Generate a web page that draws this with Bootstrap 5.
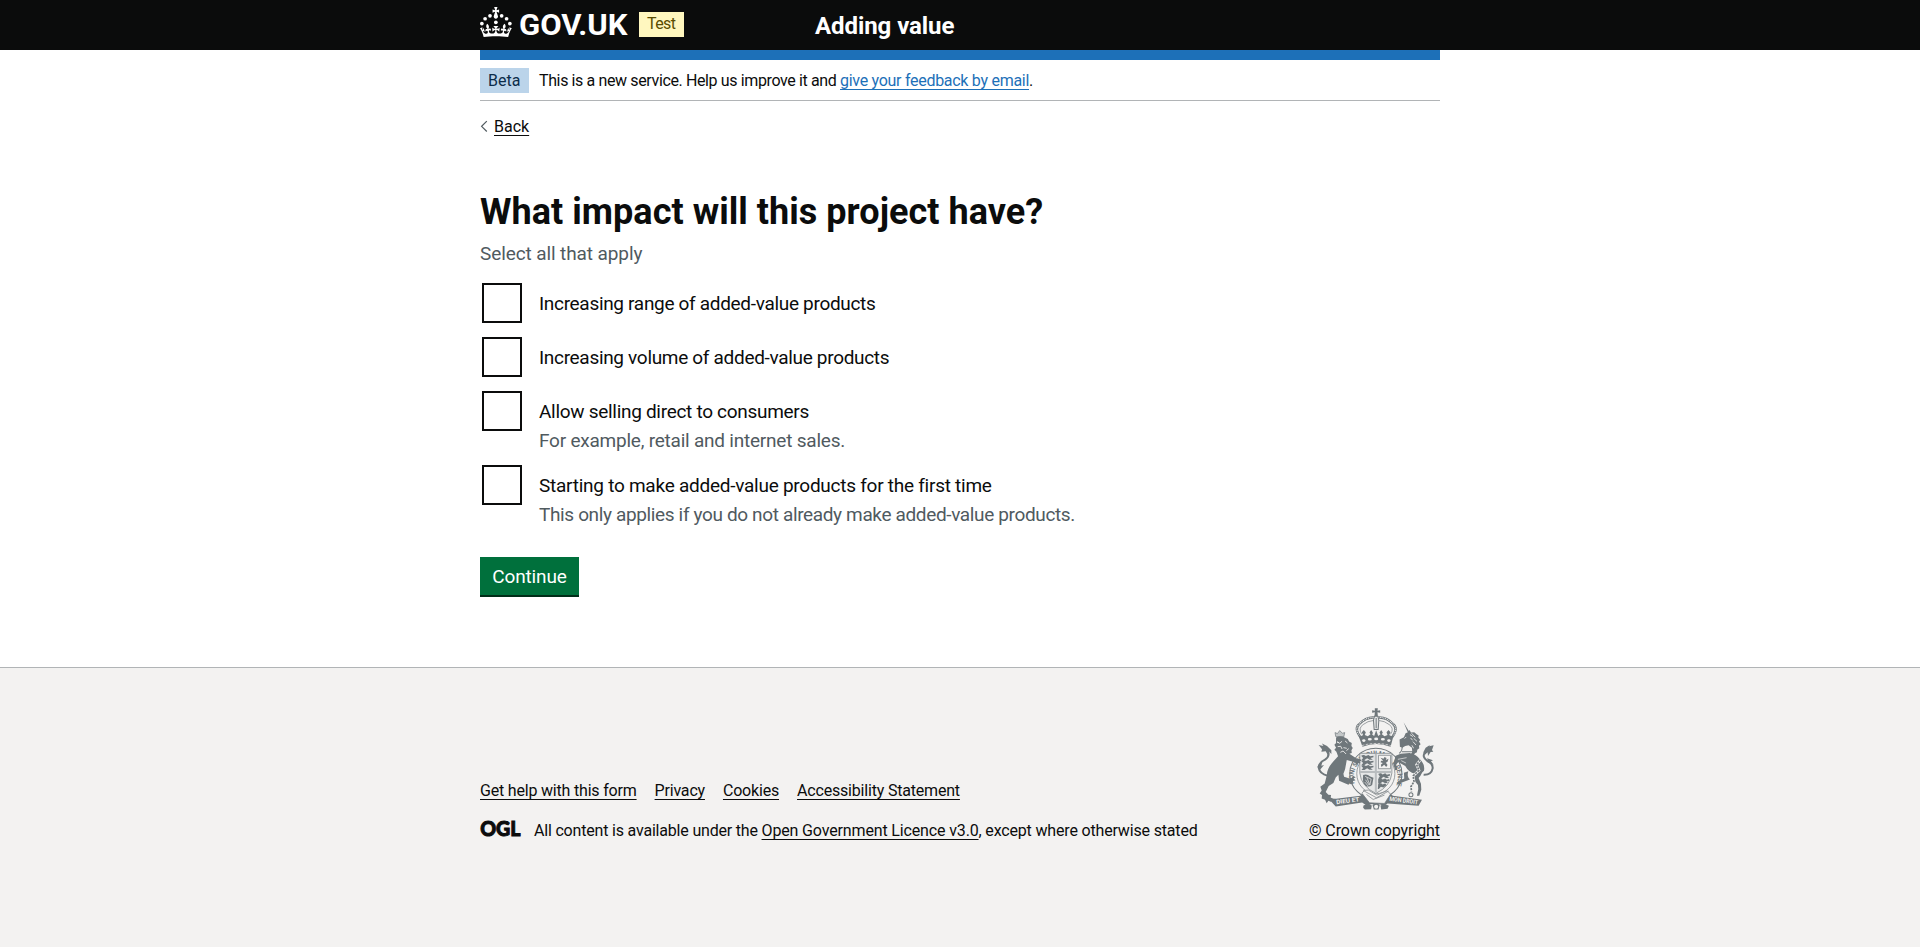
<!DOCTYPE html>
<html lang="en">
<head>
<meta charset="utf-8">
<meta name="viewport" content="width=device-width, initial-scale=1">
<title>What impact will this project have? - Adding value</title>
<link href="https://cdn.jsdelivr.net/npm/bootstrap@5.3.0/dist/css/bootstrap.min.css" rel="stylesheet">
<style>
  body { font-family: Roboto, Arial, sans-serif; color: #0b0c0c; font-size: 16px; line-height: 25px; background: #f3f2f1; }
  a { color: inherit; text-decoration-thickness: 1px; text-underline-offset: 3px; }
  a:hover { color: #003078; }
  .page-width { width: 960px; margin: 0 auto; }
  .site-header { background: #0b0c0c; color: #fff; height: 50px; }
  .site-header .page-width { height: 50px; }
  .site-logo { width: 150px; height: 32px; margin-top: 6px; overflow: visible; }
  .phase-tag { display: inline-block; height: 25px; line-height: 25px; padding: 0 8px; white-space: nowrap; }
  .tag-test { background: #fff7bf; color: #594d00; width: 45px; margin: 12px 0 0 9px; letter-spacing: -.6px; line-height: 23px; }
  .tag-beta { background: #bbd4ea; color: #0c2d4a; width: 49px; }
  .service-name { font-size: 24px; font-weight: 700; line-height: 30px; margin: 11px 0 0 131px; letter-spacing: -.07px; }
  .blue-bar { height: 10px; background: #1d70b8; }
  .phase-banner { height: 41px; padding-top: 8px; border-bottom: 1px solid #b1b4b6; }
  .phase-text { letter-spacing: -.375px; white-space: nowrap; margin-left: 10px; }
  .phase-text a { color: #1d70b8; letter-spacing: -.286px; }
  .back-row { margin-top: 16px; height: 20px; line-height: 20px; }
  .back-row svg { width: 14px; height: 14px; }
  h1 { font-size: 36px; font-weight: 700; line-height: 40px; margin: 55px 0 0; letter-spacing: .04px; }
  .hint { color: #505a5f; }
  .copy { font-size: 19px; line-height: 25px; white-space: nowrap; }
  .form-hint { margin-top: 9px; letter-spacing: -.1px; }
  .choices { margin: 17px 0 0 2px; gap: 14px; }
  .choices .form-check-input { width: 40px; height: 40px; margin: 0; border: 2px solid #0b0c0c; border-radius: 0; background-color: #fff; }
  .choice-text { margin-left: 17px; padding-top: 8px; }
  .choice-text .hint { margin-top: 4px; margin-bottom: -2px; }
  .choice-text .hint, .choice-text label { display: block; }
  .btn-continue { width: 99px; height: 38px; margin: 32px 0 72px; padding: 1px 0 0; border: 0; border-radius: 0; background: #00703c; color: #fff; box-shadow: 0 2px 0 #002d18; font-size: 19px; line-height: 37px; letter-spacing: -.13px; }
  .btn-continue:hover { background: #005a30; color: #fff; }
  .site-footer { border-top: 1px solid #b1b4b6; background: #f3f2f1; padding-top: 40px; }
  .footer-links { gap: 18px; margin-bottom: 15px; }
  .ogl { width: 41px; height: 17px; margin-right: 13px; margin-top: -4px; overflow: visible; }
  .crest { width: 117px; height: 102px; display: block; margin: 0 6.5px 8px auto; }
  .t33 { letter-spacing: -.315px; } .t29 { letter-spacing: -.295px; } .t22 { letter-spacing: -.223px; }
  .t25 { letter-spacing: -.256px; } .t36 { letter-spacing: -.36px; } .t19 { letter-spacing: -.19px; }
  .t15 { letter-spacing: -.147px; } .t17 { letter-spacing: -.169px; } .t09 { letter-spacing: -.087px; }
</style>
</head>
<body>
<header class="site-header">
  <div class="page-width d-flex align-items-start">
    <svg class="site-logo flex-shrink-0" viewBox="0 0 300 64" fill="#fff" role="img" aria-label="GOV.UK">
      <g transform="translate(0 2)">
        <circle cx="20" cy="17.6" r="3.7"/><circle cx="10.2" cy="23.5" r="3.7"/><circle cx="3.7" cy="33.2" r="3.7"/><circle cx="31.7" cy="30.6" r="3.7"/><circle cx="43.3" cy="17.6" r="3.7"/><circle cx="53.2" cy="23.5" r="3.7"/><circle cx="59.7" cy="33.2" r="3.7"/>
        <path d="M33.1,9.8c.2-.1.3-.3.5-.5l4.6,2.4v-6.8l-4.6,1.5c-.1-.2-.3-.3-.5-.5l1.9-5.9h-6.7l1.9,5.9c-.2.1-.3.3-.5.5l-4.6-1.5v6.8l4.6-2.4c.1.2.3.3.5.5l-2.6,8c-.9,2.8,1.2,5.7,4.1,5.7h0c3,0,5.1-2.9,4.1-5.7l-2.6-8ZM37,37.9s-3.4,3.8-4.1,6.1c2.2,0,4.2-.5,6.4-2.8l-.7,8.5c-2-2.8-4.4-4.1-5.7-3.8.1,3.1.5,6.7,5.8,7.2,3.7.3,6.7-1.5,7-3.8.4-2.6-2-4.3-3.7-1.6-1.4-4.5,2.4-6.1,4.9-3.2-1.9-4.5-1.8-7.7,2.4-10.9,3,4,2.6,7.3-1.2,11.1,2.4-1.3,6.2,0,4,4.6-1.2-2.8-3.7-2.2-4.2.2-.3,1.7.7,3.7,3,4.2,1.9.3,4.7-.9,7-5.9-1.3,0-2.4.7-3.9,1.7l2.4-8c.6,2.3,1.4,3.7,2.2,4.5.6-1.6.5-2.8,0-5.3l5,1.8c-2.6,3.6-5.2,8.7-7.3,17.5-7.4-1.1-15.7-1.7-24.5-1.7h0c-8.8,0-17.1.6-24.5,1.7-2.1-8.9-4.7-13.9-7.3-17.5l5-1.8c-.5,2.5-.6,3.7,0,5.3.8-.8,1.6-2.3,2.2-4.5l2.4,8c-1.5-1-2.6-1.7-3.9-1.7,2.3,5,5.2,6.2,7,5.9,2.3-.4,3.3-2.4,3-4.2-.5-2.4-3-3.1-4.2-.2-2.2-4.6,1.6-6,4-4.6-3.7-3.7-4.2-7.1-1.2-11.1,4.2,3.2,4.3,6.4,2.4,10.9,2.5-2.8,6.3-1.3,4.9,3.2-1.8-2.7-4.1-1-3.7,1.6.3,2.3,3.3,4.1,7,3.8,5.4-.5,5.7-4.2,5.8-7.2-1.3-.2-3.7,1-5.7,3.8l-.7-8.5c2.2,2.3,4.2,2.7,6.4,2.8-.7-2.3-4.1-6.1-4.1-6.1h10.6,0Z"/>
      </g>
      <text x="78" y="57" font-size="58" font-weight="700" textLength="217" lengthAdjust="spacingAndGlyphs">GOV.UK</text>
    </svg>
    <span class="phase-tag tag-test">Test</span>
    <span class="service-name">Adding value</span>
  </div>
</header>

<div class="bg-white">
  <div class="page-width">
    <div class="blue-bar"></div>
    <div class="phase-banner d-flex">
      <span class="phase-tag tag-beta">Beta</span>
      <span class="phase-text">This is a new service. Help us improve it and <a href="#">give your feedback by email</a>.</span>
    </div>
    <div class="back-row d-flex align-items-center">
      <svg viewBox="0 0 14 14" fill="none" stroke="#505a5f" stroke-width="1.2"><path d="M6.8 1.1 1.6 6.3 6.8 11.5"/></svg>
      <a href="#">Back</a>
    </div>
    <main>
      <h1>What impact will this project have?</h1>
      <div class="copy hint form-hint">Select all that apply</div>
      <div class="choices d-flex flex-column">
        <div class="d-flex">
          <input class="form-check-input flex-shrink-0" type="checkbox" id="c1">
          <div class="choice-text copy"><label class="t33" for="c1">Increasing range of added-value products</label></div>
        </div>
        <div class="d-flex">
          <input class="form-check-input flex-shrink-0" type="checkbox" id="c2">
          <div class="choice-text copy"><label class="t33" for="c2">Increasing volume of added-value products</label></div>
        </div>
        <div class="d-flex">
          <input class="form-check-input flex-shrink-0" type="checkbox" id="c3">
          <div class="choice-text copy"><label class="t29" for="c3">Allow selling direct to consumers</label><span class="hint t22">For example, retail and internet sales.</span></div>
        </div>
        <div class="d-flex">
          <input class="form-check-input flex-shrink-0" type="checkbox" id="c4">
          <div class="choice-text copy"><label class="t25" for="c4">Starting to make added-value products for the first time</label><span class="hint t36">This only applies if you do not already make added-value products.</span></div>
        </div>
      </div>
      <button class="btn btn-continue" type="button">Continue</button>
    </main>
  </div>
</div>

<footer class="site-footer">
  <div class="page-width d-flex justify-content-between align-items-end text-nowrap">
    <div>
      <div class="footer-links d-flex t19">
        <a href="#">Get help with this form</a><a href="#">Privacy</a><a href="#">Cookies</a><a href="#">Accessibility Statement</a>
      </div>
      <div class="d-flex align-items-center">
        <svg class="ogl" viewBox="0 0 41 17" role="img" aria-label="Open Government Licence"><text x=".2" y="16" font-family="Lato, sans-serif" font-size="21.5" font-weight="900" textLength="40.4" lengthAdjust="spacingAndGlyphs" fill="#0b0c0c" stroke="#0b0c0c" stroke-width="1">OGL</text></svg>
        <span class="t19">All content is available under the <a class="t15" href="#">Open Government Licence v3.0</a><span class="t17">, except where otherwise stated</span></span>
      </div>
    </div>
    <div>
      <svg class="crest" viewBox="50 54 350 304" fill="#6f777b" stroke="#6f777b" stroke-width="0" aria-hidden="true">
        <!-- garter and shield -->
        <ellipse cx="226" cy="250" rx="78" ry="76" fill="#f3f2f1" stroke-width="3"/>
        <ellipse cx="226" cy="250" rx="57" ry="60" fill="none" stroke-width="2"/>
        <path id="garter" d="M163 282A66 66 0 1 1 289 280" fill="none"/>
        <text font-size="20" font-weight="700" textLength="250"><textPath href="#garter" startOffset="2">HONI SOIT QUI MAL Y PENSE</textPath></text>
        <path d="M178 189H274V248Q270 288 226 309Q182 288 178 248Z" fill="#e6e7e7" stroke-width="2"/>
        <path d="M223 190h6v116h-6zM178 242h96v6h-96z" fill="#b9bdbf"/>
        <path d="M182 196q8-5 14 1l8-3 5 4 10-2v5l-9 2 7 5h-10l-7-4-8 5h-9l5-6zM182 211q8-5 14 1l8-3 5 4 10-2v5l-9 2 7 5h-10l-7-4-8 5h-9l5-6zM182 226q8-5 14 1l8-3 5 4 10-2v5l-9 2 7 5h-10l-7-4-8 5h-9l5-6z"/>
        <path d="M233 251q8-5 13 1l8-3 5 4 9-2v5l-8 2 6 5h-10l-7-4-7 5h-9l5-6zM233 266q8-5 13 1l8-3 5 4 7-2v5l-8 2 4 5h-9l-7-4-7 5h-6zM233 281q8-5 13 1l8-3 4 5-9 7-8-2-6 7h-3z"/>
        <path d="M234 195h36v40h-36z" fill="#f3f2f1" stroke-width="2"/>
        <path d="M240 202l9 3 3-5 6 3-2 6 8-4-3 9-5 3 5 7-4 6-6-7-8 7-2-7 6-5-7-2 2-5 6 1z"/>
        <path d="M188 254q11-5 21 4l10 4-4 22q-10 8-20 2-10-8-7-32z"/>
        <path d="M194 258l18 8-4 18M199 261l9 22M195 268l11 16M193 275l10 12" fill="none" stroke="#f3f2f1" stroke-width="2"/>
        <!-- crown -->
        <path d="M223 54h9l-1 8 8-2v8l-8-2 1 12h-10l1-12-8 2v-8l8 2z"/>
        <path d="M181 142Q160 115 176 102Q197 80 221 82M274 142Q294 115 278 102Q258 80 233 82" fill="none" stroke-width="7"/>
        <path d="M181 142Q160 115 176 102Q197 80 221 82M274 142Q294 115 278 102Q258 80 233 82" fill="none" stroke="#f3f2f1" stroke-width="3" stroke-dasharray="3 2.5"/>
        <path d="M184 132Q172 114 188 103Q202 92 218 91M270 132Q282 114 266 103Q252 92 236 91" fill="none" stroke-width="2"/>
        <path d="M222 78h10l3 12-2 28h-12l-2-28z" fill="#e6e7e7" stroke-width="3"/><path d="M227 83v31" stroke-width="3"/>
        <path d="M173 133l8 5 7-4-4-8 6-7 6 7-3 8 9 4 8-6-3-5 5-8 5 8-1 5h-2l7 5 6-17 6 17 7-5-3-5 5-8 5 8-3 5 8 6 9-4-3-8 6-7 6 7-4 8 7 4 7-5-10 36q-43-16-84 0z"/>
        <g fill="#f3f2f1"><ellipse cx="190" cy="151" rx="5" ry="4"/><ellipse cx="208" cy="147" rx="6" ry="4"/><ellipse cx="227" cy="146" rx="6" ry="4"/><ellipse cx="247" cy="147" rx="6" ry="4"/><ellipse cx="265" cy="151" rx="5" ry="4"/></g>
        <path d="M184 166q43-13 87 0" fill="none" stroke="#f3f2f1" stroke-width="2" stroke-dasharray="8 4"/>
        <!-- lion -->
        <path d="M106 139l-2-12 7 3 7-9 8 8 7-2-3 13z" fill="#c3c7c8" stroke-width="2"/>
        <path d="M107 142q12-8 26 0l9 4 4 8 8 4-1 9 4 6-4 7 1 8-7 2 20 14 13 3 3 6-6-1 3 6-7 1-3 5-7-8-24-7-5 28-5 13 2 9 19 6 10-8 6 5-7 1 6 7-7 1-1 9-8-2-5 5-28-12-2-18-8 8-7 17-14 9-9 18 8 8 8 1-1 7 8 5-8 1 2 8-9-4-5 7-5-10-10-4 1-10-7-5 6-9-4-11 13-10 6-23q0-20 19-42l15-16-5-14-6-6 5-6-5-9 5-5z"/>
        <path d="M110 155l8 4 7-6m-13 16 9-1 4 8m9-24 7 6m-12 14 10 2m-19 12 8-4 9 9m-27-36 6 2m22 24 7-6" fill="none" stroke="#f3f2f1" stroke-width="2.6"/>
        <path d="M82 256q-24-5-27-24 0-15 19-24 15-10 9-25-4-10-18-11" fill="none" stroke-width="6"/><path d="M55 164l14 3-4-7 15 7 13 13 0 11-8-8-1 14-8-14-13 1 2-7zM51 229l15-15-3 12 8-2-13 16z"/>
        <!-- unicorn -->
        <path d="M309 96l20 34-5 2z"/><path d="M297 148l13-7 5-12 7-3 5-7 4 8 10-1 7 6 6 4-1 6 6 7-4 4 5 9-5 4 1 8-6 4-1 8-6 3-5 8-9 2 6-14-1-13-10-7-10 2-9 5-7-3z"/>
        <path d="M312 145l5-5m11-7 9 6m-4-10 11 12m-5 3 10 9m-12 1 9 10m-12 1 5 9m-9-31 6 7" fill="none" stroke="#f3f2f1" stroke-width="2.5"/>
        <path d="M305 163q2 17-9 26M343 170q-2 16-13 24M304 184h40" fill="none" stroke-width="3"/>
        <path d="M284 197l16-7 27-2q21 4 30 18 17 15 13 35l-10 10-18-1q-17-3-28-23l-21-12-6 8 4 15-7 2-6-20 5-15z"/>
        <path d="M292 207l26-5M302 211l14 7" stroke="#f3f2f1" stroke-width="2" fill="none"/>
        <path d="M323 243q-5 18 5 24l-24 9-11 6-5-4 10-8 13-6-1-17zM366 236q-2 18-12 27l7 17 1 18-6 18h-7l4-20-1-12-17-21 15-29z"/>
        <path d="M359 209l-11 14 7 17-17 16 2 18-9 15 2 14" fill="none" stroke="#f3f2f1" stroke-width="8"/><path d="M359 209l-11 14 7 17-17 16 2 18-9 15 2 14" fill="none" stroke-width="5" stroke-dasharray="6 3"/><circle cx="331" cy="313" r="6" fill="none" stroke-width="3"/>
        <path d="M369 253q23 1 27-19 1-14-16-22-17-13-7-26 5-7 19-11" fill="none" stroke-width="6"/><path d="M399 165l-14 3 4-5-14 9-7 14 5 7 8-7 1 11 8-12 8-1-4-5zM379 204l18 6-6 3 8 10-15-6z"/>
        <!-- scroll and motto -->
        <path d="M84 324l23 1 73-9 10-10 13 24 46 1 15-25 13 10 87 12-10 18-93-7-12 7q-23-13-50 0l-14-10-79 12z"/>
        <path d="M184 308q8-12 20-9l25 15 31-13 10 10-18 28-45-2z" fill="#f3f2f1" stroke-width="2"/>
        <path d="M188 300l40 22 36-20M198 312l20 15 34-13" fill="none" stroke-width="2"/>
        <path d="M189 345l13-5 12 5-2 11-19 1-5-5zM240 345l12-5 13 6-4 9-19 2zM216 343q11-9 22 0l-4 14h-14z"/><circle cx="227" cy="349" r="6" fill="#f3f2f1"/>
        <g fill="#f3f2f1" font-size="18" font-weight="700"><text transform="translate(108 341) rotate(-7)" textLength="70" lengthAdjust="spacingAndGlyphs">DIEU ET</text><text transform="translate(266 331) rotate(7)" textLength="86" lengthAdjust="spacingAndGlyphs">MON DROIT</text></g>
      </svg>
      <div class="t09 text-end"><a href="#">© Crown copyright</a></div>
    </div>
  </div>
</footer>
<script src="https://cdn.jsdelivr.net/npm/bootstrap@5.3.0/dist/js/bootstrap.bundle.min.js"></script>
</body>
</html>
